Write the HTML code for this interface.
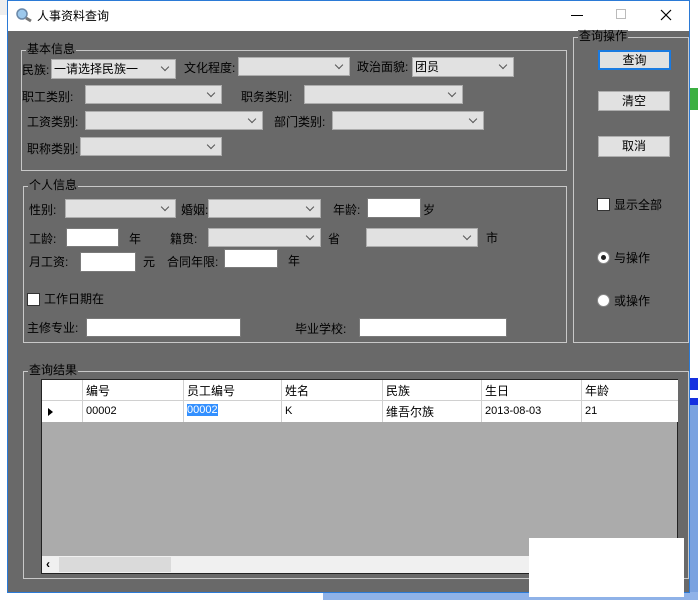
<!DOCTYPE html>
<html><head><meta charset="utf-8"><style>
*{margin:0;padding:0;box-sizing:border-box}
body{width:698px;height:600px;position:relative;overflow:hidden;background:#fff;font-family:"Liberation Sans","Noto Sans CJK SC",sans-serif;font-size:12px;color:#000}
.a{position:absolute}
.t{position:absolute;white-space:nowrap;line-height:14px}
.cb{position:absolute;background:#e1e1e1;border:1px solid #adadad}
.cb:after{content:"";position:absolute;right:7px;top:4px;width:5px;height:5px;border-right:1px solid #555;border-bottom:1px solid #555;transform:rotate(45deg)}
.tb{position:absolute;background:#fff;border:1px solid #7a7a7a}
.g{position:absolute;border:1px solid #c8c8c8}
.gl{position:absolute;background:#696969;padding:0 1px;line-height:13px;white-space:nowrap}
.btn{position:absolute;background:#e1e1e1;border:1px solid #adadad;text-align:center;line-height:18px}
.chk{position:absolute;width:13px;height:13px;background:#fff;border:1px solid #333}
.rd{position:absolute;width:13px;height:13px;background:#fff;border-radius:50%;border:1px solid #888}
.c{position:absolute;top:0;height:100%;border-left:1px solid #d0d0d0;padding:2px 3px;white-space:nowrap}
</style></head><body>
<div class="a" style="left:0;top:0;width:7px;height:15px;background:#eee"></div>
<!-- outside right -->
<div class="a" style="left:690px;top:88px;width:8px;height:22px;background:#3cb043"></div>
<div class="a" style="left:690px;top:378px;width:8px;height:12px;background:#1530e0"></div>
<div class="a" style="left:690px;top:398px;width:8px;height:7px;background:#1530e0"></div>
<div class="a" style="left:690px;top:405px;width:8px;height:195px;background:#7aa2e0"></div>
<div class="a" style="left:323px;top:592px;width:375px;height:8px;background:#8fb2e8"></div>
<!-- window -->
<div class="a" style="left:7px;top:0;width:683px;height:593px;border:1px solid #2b7ad6;background:#696969"></div>
<div class="a" style="left:8px;top:1px;width:681px;height:30px;background:#fff"></div>
<svg class="a" style="left:15px;top:7px" width="18" height="16"><circle cx="7" cy="7" r="5" fill="#9cc8ec" stroke="#6a88a8" stroke-width="1.5"/><line x1="11" y1="11" x2="16" y2="14" stroke="#777" stroke-width="3"/></svg>
<div class="t" style="left:37px;top:9px;font-size:12px">人事资料查询</div>
<div class="a" style="left:571px;top:15px;width:12px;height:1px;background:#000"></div>
<div class="a" style="left:616px;top:9px;width:10px;height:10px;border:1px solid #bbb"></div>
<svg class="a" style="left:660px;top:9px" width="12" height="12"><path d="M1 1L11 11M11 1L1 11" stroke="#000" stroke-width="1.2"/></svg>

<!-- 基本信息 -->
<div class="g" style="left:21px;top:50px;width:546px;height:121px"></div>
<div class="gl" style="left:26px;top:43px">基本信息</div>
<div class="t" style="left:22px;top:63px">民族:</div>
<div class="cb" style="left:51px;top:59px;width:125px;height:20px"><span class="t" style="left:2px;top:2px">一请选择民族一</span></div>
<div class="t" style="left:184px;top:61px">文化程度:</div>
<div class="cb" style="left:238px;top:57px;width:112px;height:19px"></div>
<div class="t" style="left:357px;top:60px">政治面貌:</div>
<div class="cb" style="left:412px;top:57px;width:102px;height:20px"><span class="t" style="left:2px;top:2px">团员</span></div>
<div class="t" style="left:22px;top:90px">职工类别:</div>
<div class="cb" style="left:85px;top:85px;width:137px;height:19px"></div>
<div class="t" style="left:241px;top:90px">职务类别:</div>
<div class="cb" style="left:304px;top:85px;width:159px;height:19px"></div>
<div class="t" style="left:27px;top:115px">工资类别:</div>
<div class="cb" style="left:85px;top:111px;width:178px;height:19px"></div>
<div class="t" style="left:274px;top:115px">部门类别:</div>
<div class="cb" style="left:332px;top:111px;width:152px;height:19px"></div>
<div class="t" style="left:27px;top:142px">职称类别:</div>
<div class="cb" style="left:80px;top:137px;width:142px;height:19px"></div>

<!-- 个人信息 -->
<div class="g" style="left:23px;top:186px;width:544px;height:157px"></div>
<div class="gl" style="left:28px;top:179px">个人信息</div>
<div class="t" style="left:29px;top:203px">性别:</div>
<div class="cb" style="left:65px;top:199px;width:111px;height:19px"></div>
<div class="t" style="left:181px;top:203px">婚姻:</div>
<div class="cb" style="left:208px;top:199px;width:113px;height:19px"></div>
<div class="t" style="left:333px;top:203px">年龄:</div>
<div class="tb" style="left:367px;top:198px;width:54px;height:20px"></div>
<div class="t" style="left:423px;top:203px">岁</div>
<div class="t" style="left:29px;top:232px">工龄:</div>
<div class="tb" style="left:66px;top:228px;width:53px;height:19px"></div>
<div class="t" style="left:129px;top:232px">年</div>
<div class="t" style="left:170px;top:232px">籍贯:</div>
<div class="cb" style="left:208px;top:228px;width:113px;height:19px"></div>
<div class="t" style="left:328px;top:232px">省</div>
<div class="cb" style="left:366px;top:228px;width:112px;height:19px"></div>
<div class="t" style="left:486px;top:231px">市</div>
<div class="t" style="left:29px;top:255px">月工资:</div>
<div class="tb" style="left:80px;top:252px;width:56px;height:20px"></div>
<div class="t" style="left:143px;top:255px">元</div>
<div class="t" style="left:167px;top:255px">合同年限:</div>
<div class="tb" style="left:224px;top:249px;width:54px;height:19px"></div>
<div class="t" style="left:288px;top:254px">年</div>
<div class="chk" style="left:27px;top:293px"></div>
<div class="t" style="left:44px;top:292px">工作日期在</div>
<div class="t" style="left:27px;top:321px">主修专业:</div>
<div class="tb" style="left:86px;top:318px;width:155px;height:19px"></div>
<div class="t" style="left:295px;top:322px">毕业学校:</div>
<div class="tb" style="left:359px;top:318px;width:148px;height:19px"></div>

<!-- 查询操作 -->
<div class="g" style="left:573px;top:37px;width:116px;height:306px"></div>
<div class="gl" style="left:578px;top:30px">查询操作</div>
<div class="btn" style="left:598px;top:50px;width:73px;height:20px;border:2px solid #1a7ae0;line-height:16px">查询</div>
<div class="btn" style="left:598px;top:91px;width:72px;height:20px">清空</div>
<div class="btn" style="left:598px;top:136px;width:72px;height:21px">取消</div>
<div class="chk" style="left:597px;top:198px"></div>
<div class="t" style="left:614px;top:198px">显示全部</div>
<div class="rd" style="left:597px;top:251px"></div>
<div class="a" style="left:601px;top:255px;width:5px;height:5px;border-radius:50%;background:#222"></div>
<div class="t" style="left:614px;top:251px">与操作</div>
<div class="rd" style="left:597px;top:294px"></div>
<div class="t" style="left:614px;top:294px">或操作</div>

<!-- 查询结果 -->
<div class="g" style="left:23px;top:371px;width:666px;height:208px"></div>
<div class="gl" style="left:28px;top:364px">查询结果</div>
<div class="a" style="left:41px;top:379px;width:637px;height:195px;background:#ababab;border:1px solid #222"></div>
<div class="a" style="left:42px;top:380px;width:636px;height:20px;background:#fff">
 <div class="c" style="left:40px">编号</div><div class="c" style="left:141px">员工编号</div><div class="c" style="left:239px">姓名</div><div class="c" style="left:340px">民族</div><div class="c" style="left:439px">生日</div><div class="c" style="left:539px">年龄</div>
</div>
<div class="a" style="left:42px;top:400px;width:636px;height:22px;background:#fff;border-top:1px solid #d0d0d0;font-size:11px">
 <svg class="a" style="left:6px;top:7px" width="5" height="8"><path d="M0 0L5 4L0 8Z" fill="#000"/></svg>
 <div class="c" style="left:40px;padding-top:4px">00002</div><div class="c" style="left:141px;padding-top:3px"><span style="background:#3390ff;color:#fff">00002</span></div><div class="c" style="left:239px;padding-top:4px">K</div><div class="c" style="left:340px;padding-top:2px;font-size:12px">维吾尔族</div><div class="c" style="left:439px;padding-top:4px">2013-08-03</div><div class="c" style="left:539px;padding-top:4px">21</div>
</div>
<div class="a" style="left:42px;top:556px;width:636px;height:17px;background:#f0f0f0"></div>
<div class="a" style="left:59px;top:557px;width:112px;height:15px;background:#dadada"></div>
<div class="t" style="left:46px;top:557px;font-weight:bold">‹</div>
<div class="a" style="left:529px;top:538px;width:155px;height:59px;background:#fff"></div>
</body></html>
